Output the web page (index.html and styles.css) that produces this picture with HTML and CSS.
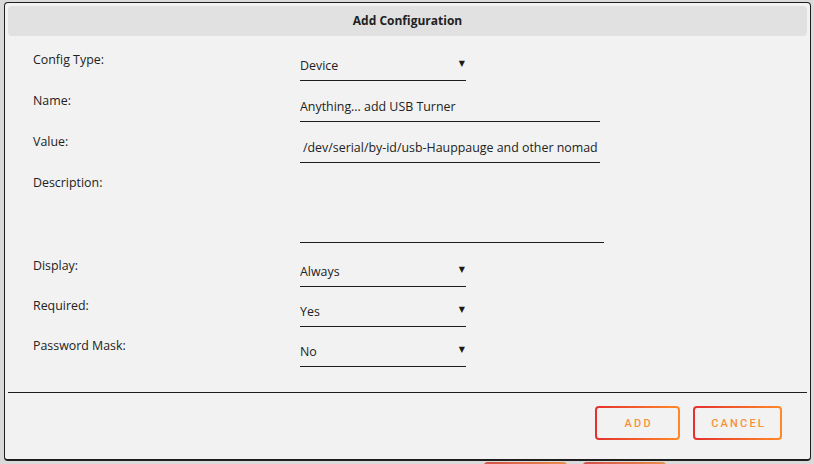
FILE: index.html
```html
<!DOCTYPE html>
<html lang="en">
<head>
    <meta charset="UTF-8">
    <meta name="viewport" content="width=device-width, initial-scale=1.0">
    <title>Add Configuration</title>
    <link rel="stylesheet" href="styles.css">
</head>
<body>
    <div class="dialog">
        <div class="dialog-header">Add Configuration</div>

        <form class="config-form">
            <div class="field">
                <label class="field-label">Config Type:</label>
                <div class="select-wrap">
                    <select class="field-select">
                        <option>Device</option>
                    </select>
                </div>
            </div>
            <div class="field">
                <label class="field-label">Name:</label>
                <input class="field-input" type="text" value="Anything... add USB Turner">
            </div>
            <div class="field">
                <label class="field-label">Value:</label>
                <input class="field-input indent" type="text" value="/dev/serial/by-id/usb-Hauppauge and other nomad devices">
            </div>
            <div class="field field-tall">
                <label class="field-label">Description:</label>
                <textarea class="field-textarea"></textarea>
            </div>
            <div class="field field-tight">
                <label class="field-label">Display:</label>
                <div class="select-wrap">
                    <select class="field-select">
                        <option>Always</option>
                    </select>
                </div>
            </div>
            <div class="field field-tight">
                <label class="field-label">Required:</label>
                <div class="select-wrap">
                    <select class="field-select">
                        <option>Yes</option>
                    </select>
                </div>
            </div>
            <div class="field field-tight">
                <label class="field-label">Password Mask:</label>
                <div class="select-wrap">
                    <select class="field-select">
                        <option>No</option>
                    </select>
                </div>
            </div>
        </form>

        <div class="dialog-footer">
            <button class="outline-button">ADD</button>
            <button class="outline-button">CANCEL</button>
        </div>
    </div>

    <!-- page buttons sitting behind the dialog -->
    <div class="page-actions">
        <button class="fill-button"></button>
        <button class="fill-button"></button>
    </div>
</body>
</html>
```

FILE: styles.css
```css
body {
    font-family: 'Open Sans', Roboto, 'Liberation Sans', sans-serif;
    background: #dadada;
    color: #222;
    margin: 0;
    padding: 2px 3px 0 4px;
    overflow: hidden;
    height: 464px;
    box-sizing: border-box;
}

.dialog {
    background: #f2f2f2;
    border: 1px solid #1e1e1e;
    border-bottom-width: 2px;
    border-radius: 4px;
    padding: 3px;
    height: 459px;
    box-sizing: border-box;
    display: flex;
    flex-direction: column;
}

.dialog-header {
    background: #e1e1e1;
    border-radius: 4px;
    height: 30px;
    line-height: 30px;
    text-align: center;
    font-size: 12px;
    font-weight: bold;
}

.config-form {
    padding: 15px 25px 25px 25px;
    margin: 0;
}

.field {
    display: grid;
    grid-template-columns: 267px auto;
    align-items: start;
    margin-bottom: 11px;
}

.field-tall {
    margin-bottom: 14px;
}

.field-tight {
    margin-bottom: 10px;
}

.field:last-child {
    margin-bottom: 0;
}

.field-label {
    font-size: 12.4px;
    line-height: 20px;
    margin-top: -1px;
    color: #222;
}

.field-input,
.field-select,
.field-textarea {
    font-family: inherit;
    font-size: 12.4px;
    color: #222;
    background: transparent;
    border: none;
    border-bottom: 1px solid #1e1e1e;
    border-radius: 0;
    outline: none;
    margin: 0;
    padding: 0;
    box-sizing: border-box;
    height: 30px;
}

.field-input {
    width: 300px;
}

.field-input.indent {
    padding-left: 3px;
}

.field-textarea {
    width: 304px;
    height: 69px;
    resize: none;
    display: block;
}

.select-wrap {
    position: relative;
    width: 166px;
}

.field-select {
    -webkit-appearance: none;
    appearance: none;
    width: 100%;
    display: block;
}

.select-wrap::after {
    content: "▼";
    position: absolute;
    right: 1px;
    top: 8px;
    font-family: 'DejaVu Sans', sans-serif;
    font-size: 8px;
    color: #1a1a1a;
    pointer-events: none;
}

.dialog-footer {
    border-top: 1px solid #1e1e1e;
    padding: 13px 25px 0 0;
    display: flex;
    justify-content: flex-end;
    gap: 13px;
}

.outline-button {
    font-family: Roboto, sans-serif;
    font-size: 11px;
    font-weight: 500;
    letter-spacing: 2.2px;
    color: #f7923a;
    height: 34px;
    min-width: 85px;
    padding: 0 14px 0 16px;
    border: 2px solid transparent;
    border-radius: 4px;
    background: linear-gradient(#f2f2f2, #f2f2f2) padding-box,
                linear-gradient(90deg, #e4302f, #ff8a28) border-box;
    cursor: pointer;
}

.page-actions {
    display: flex;
    gap: 14px;
    height: 3px;
    overflow: hidden;
    padding: 1px 0 0 479px;
}

.fill-button {
    width: 85px;
    height: 34px;
    flex-shrink: 0;
    border: none;
    border-radius: 5px;
    background: linear-gradient(90deg, #d2504b, #e8904a);
}
```
